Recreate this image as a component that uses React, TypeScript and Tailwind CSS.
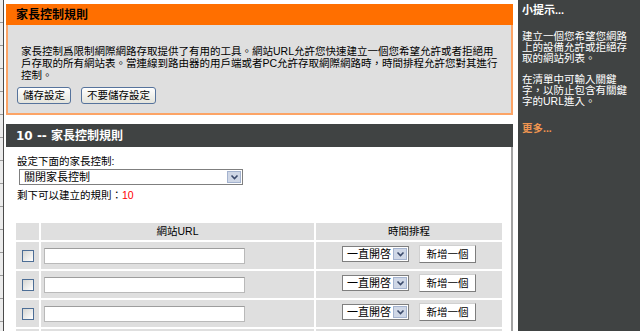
import React from 'react';

const font = "font-['Liberation_Sans','Noto_Sans_CJK_TC',sans-serif]";

const Chevron = () => (
  <svg width="9" height="6" viewBox="0 0 9 6">
    <polyline points="1.5,1.5 4.5,4.5 7.5,1.5" fill="none" stroke="#3b4a6b" strokeWidth="1.6" />
  </svg>
);

const FakeSelect = ({ label, width }: { label: string; width: string }) => (
  <div className={`flex h-[16px] items-stretch border border-[#7f7f7f] bg-white ${width}`}>
    <div className="flex flex-1 items-center pl-[4px] text-[11px] leading-none text-black">{label}</div>
    <div className="m-[1px] flex w-[14px] items-center justify-center border border-[#a4b3cf] bg-[#cfd7e6]">
      <Chevron />
    </div>
  </div>
);

const XpButton = ({ children }: { children: React.ReactNode }) => (
  <div className="flex h-[17px] items-center rounded-[3px] border border-[#56739c] bg-linear-to-b from-white to-[#e4e4dc] px-[5px] text-[10.5px] leading-none text-black">
    {children}
  </div>
);

const Row = () => (
  <>
    <div className="flex h-[27px] items-center justify-center bg-[#dfdfdf]">
      <div className="h-[12px] w-[12px] border border-[#4d6e96] bg-linear-to-br from-[#d6d6d2] to-white" />
    </div>
    <div className="flex h-[27px] items-center bg-[#dfdfdf] pl-[3px]">
      <div className="h-[16px] w-[201px] border border-[#b9b9b9] border-t-[#9d9d9d] bg-white" />
    </div>
    <div className="flex h-[27px] items-center justify-center gap-[10px] bg-[#dfdfdf] pb-[3px]">
      <FakeSelect label="一直開啓" width="w-[67px]" />
      <div className="flex h-[18px] w-[57px] items-center justify-center border border-[#d0d0d0] border-b-[#7d7d7d] border-r-[#7d7d7d] bg-white text-[10.5px] leading-none text-black">
        新增一個
      </div>
    </div>
  </>
);

export default function App() {
  return (
    <div className={`flex h-[331px] w-[640px] overflow-hidden bg-white ${font}`}>
      {/* left nav edge */}
      <div className="flex w-[4px] flex-col border-r border-[#4a4a4a] bg-[#ececec]">
        {Array.from({ length: 15 }).map((_, i) => (
          <div key={i} className="h-[23px] shrink-0 border-b border-[#9a9a9a]" />
        ))}
      </div>

      {/* main */}
      <div className="ml-[2px] w-[507px] shrink-0">
        <div className="mt-[4px]">
          <div className="flex h-[21px] items-center bg-[#ff6f00] pl-[10px] text-[12px] font-bold text-black">
            家長控制規則
          </div>
          <div className="border-2 border-t-0 border-[#fca466] bg-[#dfdfdf] pb-[9px] pt-[20px]">
            <p className="ml-[13px] whitespace-nowrap text-[10.5px] leading-[12px] text-black">
              家長控制爲限制網際網路存取提供了有用的工具。網站URL允許您快速建立一個您希望允許或者拒絕用
              <br />
              戶存取的所有網站表。當連線到路由器的用戶端或者PC允許存取網際網路時，時間排程允許您對其進行
              <br />
              控制。
            </p>
            <div className="ml-[9px] mt-[6px] flex gap-[10px]">
              <XpButton>儲存設定</XpButton>
              <XpButton>不要儲存設定</XpButton>
            </div>
          </div>
        </div>

        <div className="mt-[9px]">
          <div className="flex h-[23px] items-center bg-[#404343] pl-[10px] text-[12px] font-bold text-white">
            <span className="font-['DejaVu_Sans',sans-serif] whitespace-pre">10 -- </span>
            家長控制規則
          </div>
          <div className="h-[200px] border-r-2 border-[#a3a3a3] bg-white pl-[11px] pt-[8px]">
            <div className="text-[10.5px] leading-[12px] text-black">設定下面的家長控制:</div>
            <div className="ml-[2px] mt-[2px]">
              <FakeSelect label="關閉家長控制" width="w-[224px]" />
            </div>
            <div className="mt-[4px] text-[10.5px] leading-[12px] text-black">
              剩下可以建立的規則：<span className="text-[#ff0000]">10</span>
            </div>
            <div className="mt-[22px] grid w-[490px] grid-cols-[23px_273px_186px] gap-[2px] -translate-x-[1px]">
              <div className="h-[17px] bg-[#dfdfdf]" />
              <div className="flex h-[17px] items-center justify-center bg-[#dfdfdf] text-[10.5px] text-black">
                網站URL
              </div>
              <div className="flex h-[17px] items-center justify-center bg-[#dfdfdf] text-[10.5px] text-black">
                時間排程
              </div>
              <Row />
              <Row />
              <Row />
              <div className="h-[27px] bg-[#dfdfdf]" />
              <div className="h-[27px] bg-[#dfdfdf]" />
              <div className="h-[27px] bg-[#dfdfdf]" />
            </div>
          </div>
        </div>
      </div>

      {/* sidebar */}
      <div className="ml-[5px] w-[122px] shrink-0 bg-[#404343] pl-[4px] pt-[4px] text-white">
        <div className="text-[11px] font-bold leading-[13px]">小提示...</div>
        <p className="mt-[14px] whitespace-nowrap text-[10.5px] leading-[11px]">
          建立一個您希望您網路
          <br />
          上的設備允許或拒絕存
          <br />
          取的網站列表。
        </p>
        <p className="mt-[10px] whitespace-nowrap text-[10.5px] leading-[11px]">
          在清單中可輸入關鍵
          <br />
          字，以防止包含有關鍵
          <br />
          字的URL進入。
        </p>
        <div className="mt-[16px] text-[10.5px] font-bold leading-[11px] text-[#ef9550]">更多...</div>
      </div>
    </div>
  );
}
